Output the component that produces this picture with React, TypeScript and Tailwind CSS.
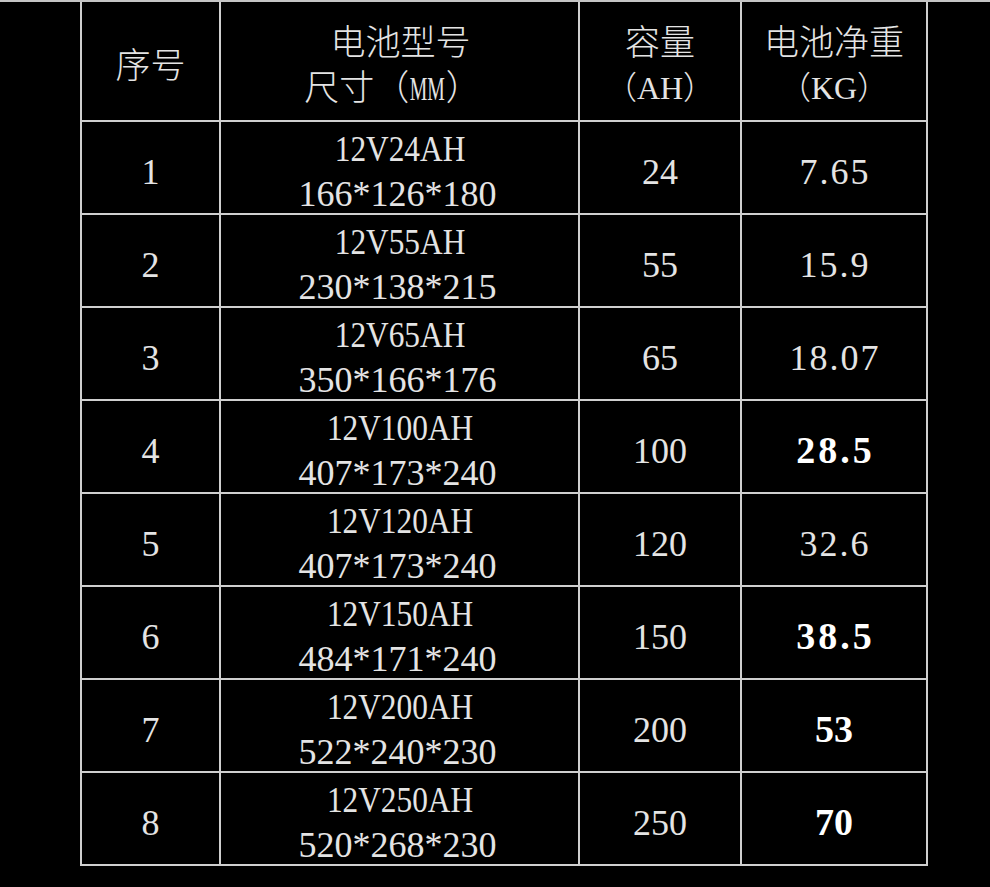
const rows = [
  { no: "1", model: "12V24AH", size: "166*126*180", ah: "24", kg: "7.65", bold: false },
  { no: "2", model: "12V55AH", size: "230*138*215", ah: "55", kg: "15.9", bold: false },
  { no: "3", model: "12V65AH", size: "350*166*176", ah: "65", kg: "18.07", bold: false },
  { no: "4", model: "12V100AH", size: "407*173*240", ah: "100", kg: "28.5", bold: true },
  { no: "5", model: "12V120AH", size: "407*173*240", ah: "120", kg: "32.6", bold: false },
  { no: "6", model: "12V150AH", size: "484*171*240", ah: "150", kg: "38.5", bold: true },
  { no: "7", model: "12V200AH", size: "522*240*230", ah: "200", kg: "53", bold: true },
  { no: "8", model: "12V250AH", size: "520*268*230", ah: "250", kg: "70", bold: true },
];

const cell = "flex flex-col items-center justify-center border-r-2 border-b-2 border-[#cfcfcf]";

export default function App() {
  return (
    <div className="min-h-[887px] w-full bg-black border-t-2 border-[#c4c4c4] font-['Liberation_Serif','Noto_Sans_CJK_SC',serif] text-[#e4e4e4]">
      <div className="ml-[80px] grid w-[848px] grid-cols-[139px_359px_162px_186px] border-l-2 border-[#cfcfcf]">
        {/* header */}
        <div className={`${cell} h-[120px] pt-[12px] text-[35px] font-light`}>序号</div>
        <div className={`${cell} h-[120px] pt-[10px] text-[35px] font-light leading-[45px]`}>
          <span className="pl-[2px]">电池型号</span>
          <span className="pr-[14px]">
            尺寸（<span className="mx-[-12px] inline-block scale-x-[0.58] text-[34px]">MM</span>）
          </span>
        </div>
        <div className={`${cell} h-[120px] pt-[10px] text-[35px] font-light leading-[45px]`}>
          <span>容量</span>
          <span className="text-[32px]">（AH）</span>
        </div>
        <div className={`${cell} h-[120px] pt-[10px] text-[35px] font-light leading-[45px]`}>
          <span>电池净重</span>
          <span className="text-[32px]">（KG）</span>
        </div>

        {rows.map((r) => (
          <div key={r.no} className="contents">
            <div className={`${cell} h-[93px] pt-[8px] text-[36px]`}>{r.no}</div>
            <div className={`${cell} h-[93px] pt-[8px] text-[36px] leading-[45px]`}>
              <span className="inline-block scale-x-[0.87]">{r.model}</span>
              <span className="pr-[4px]">{r.size}</span>
            </div>
            <div className={`${cell} h-[93px] pt-[8px] text-[36px]`}>{r.ah}</div>
            <div className={`${cell} h-[93px] pt-[8px]`}>
              {r.bold ? (
                <span className={`text-[38px] font-bold text-white ${r.kg.includes(".") ? "tracking-[3px] pl-[3px]" : ""}`}>
                  {r.kg}
                </span>
              ) : (
                <span className="text-[36px] tracking-[2px] pl-[2px]">{r.kg}</span>
              )}
            </div>
          </div>
        ))}
      </div>
    </div>
  );
}
